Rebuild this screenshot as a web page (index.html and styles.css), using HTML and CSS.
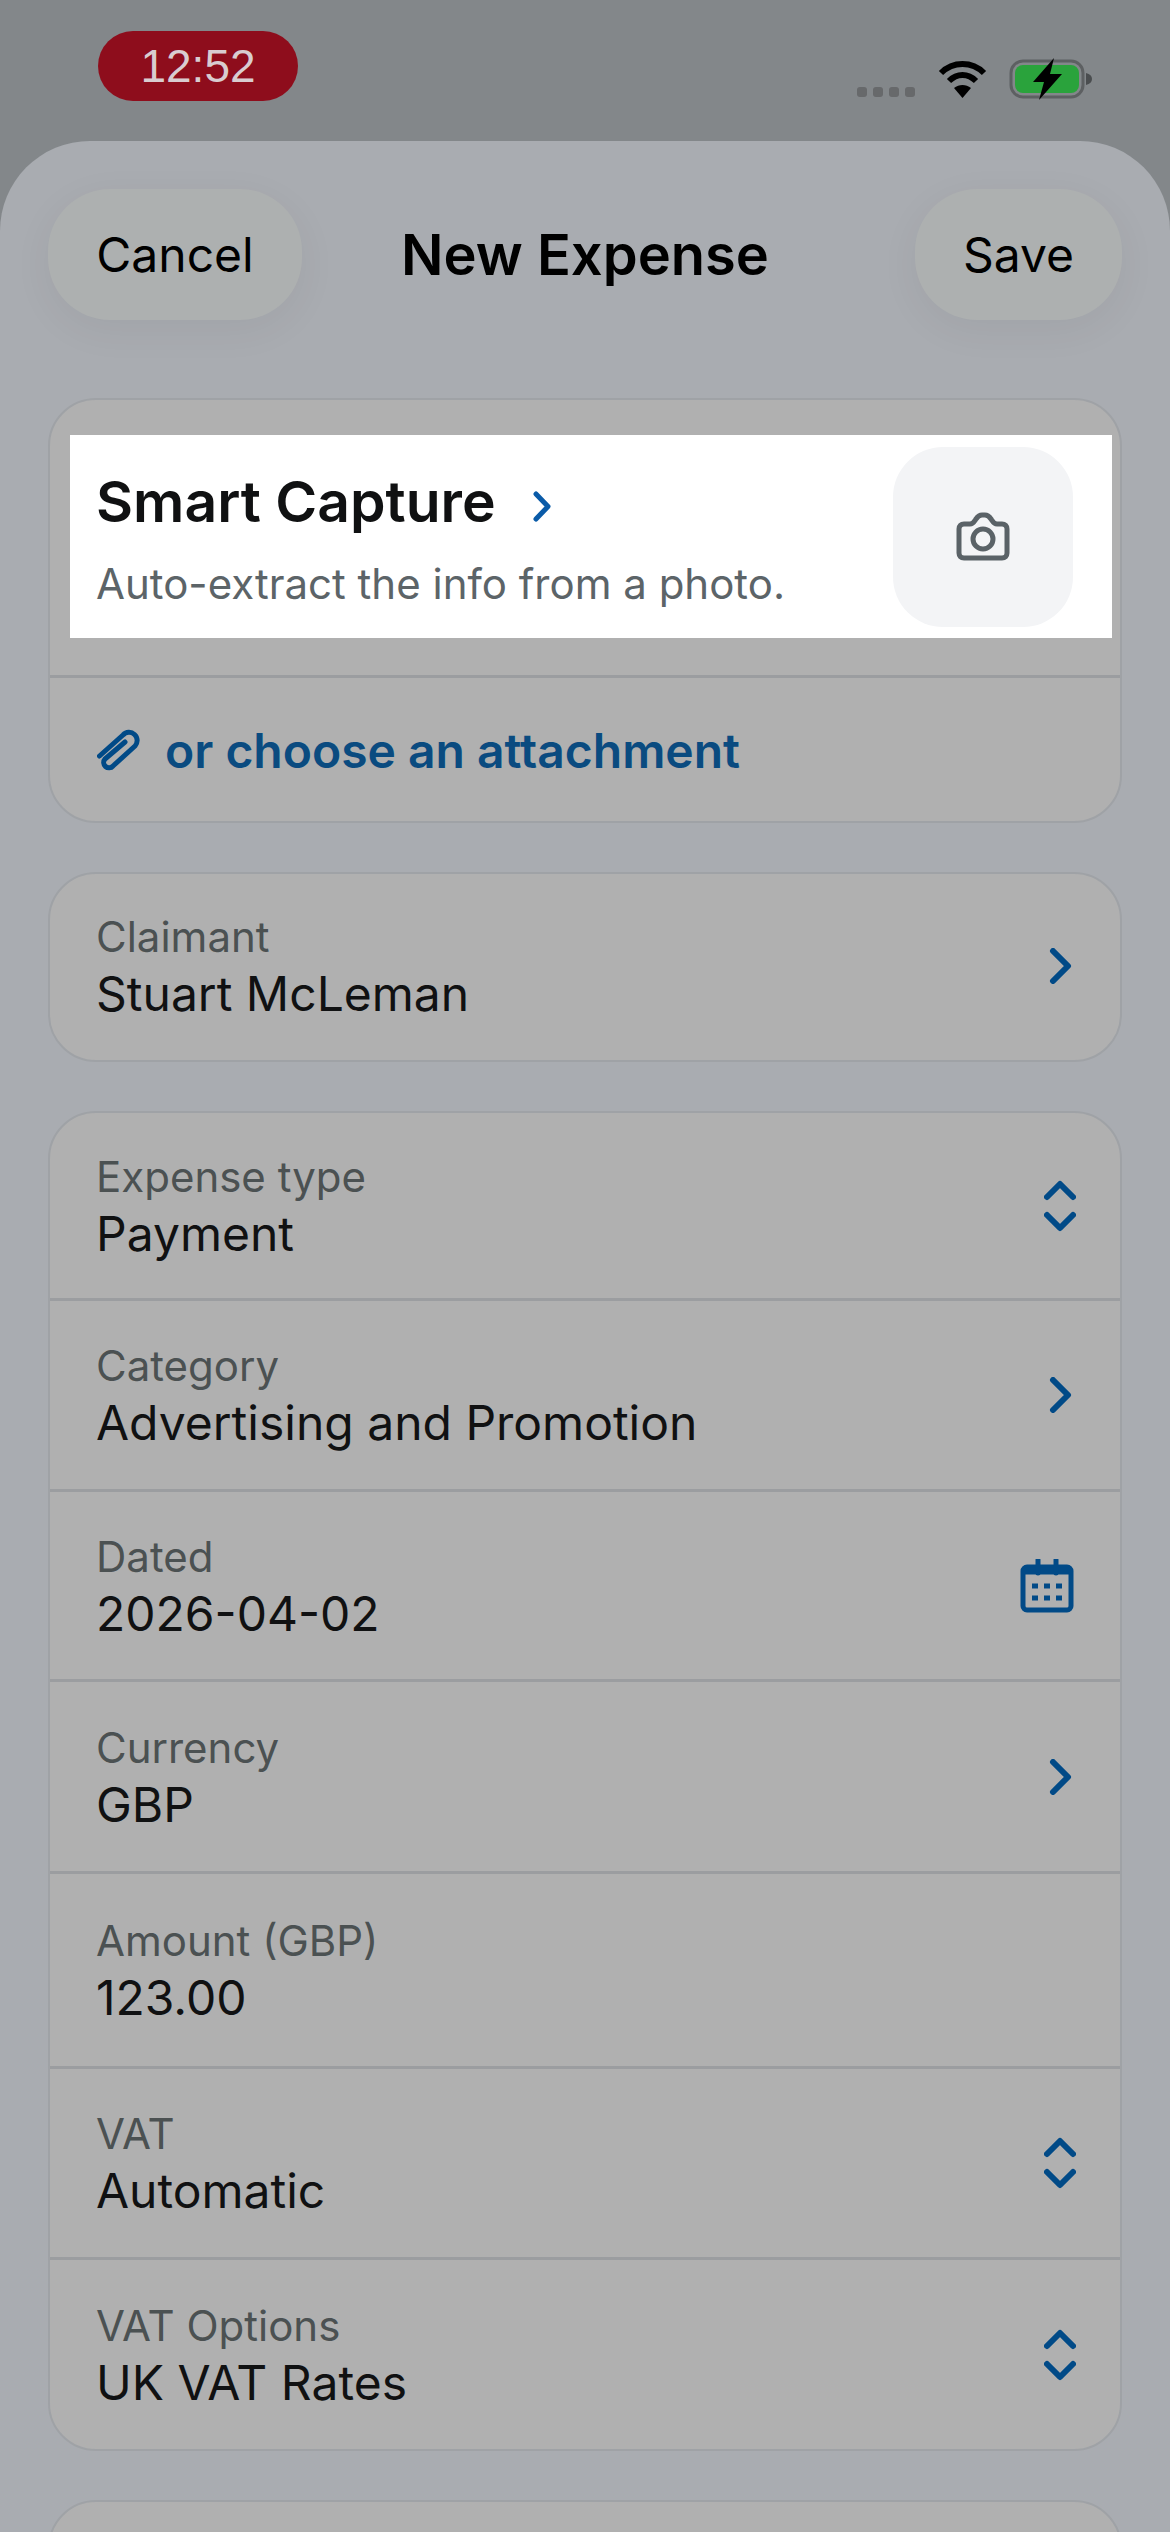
FILE: index.html
```html
<!DOCTYPE html>
<html lang="en">
<head>
  <meta charset="UTF-8">
  <meta name="viewport" content="width=device-width, initial-scale=1.0">
  <title>New Expense</title>
  <link rel="stylesheet" href="styles.css">
</head>
<body>

  <div class="status-bar">
    <div class="clock">12:52</div>
    <div class="status-icons">
      <div class="signal"><span></span><span></span><span></span><span></span></div>
      <svg class="wifi" width="49" height="39" viewBox="0 0 49 39">
        <path d="M3 14C15 2 34 2 46 14" fill="none" stroke="#000" stroke-width="6"/>
        <path d="M11 22C19 14 30 14 38 22" fill="none" stroke="#000" stroke-width="6"/>
        <path d="M16 29C21 25 28 25 33 29L24.5 39Z" fill="#000"/>
      </svg>
      <svg class="battery" width="84" height="44" viewBox="0 0 84 44">
        <rect x="2" y="4" width="72" height="36" rx="12" fill="none" stroke="#5d6062" stroke-width="3"/>
        <rect x="6" y="8" width="64" height="28" rx="8" fill="#2aa33c"/>
        <path d="M77 16c4 1 6 3 6 6s-2 5-6 6z" fill="#4a4d4f"/>
        <path d="M45 1 24 25h11l-5 18 23-26H41z" fill="#000"/>
      </svg>
    </div>
  </div>

  <main class="sheet">
    <header class="nav">
      <button class="nav-btn cancel">Cancel</button>
      <h1>New Expense</h1>
      <button class="nav-btn save">Save</button>
    </header>

    <section class="card">
      <div class="capture-wrap">
        <div class="capture">
          <div class="capture-text">
            <h2>Smart Capture
              <svg class="capture-chevron" width="20" height="31" viewBox="0 0 20 31">
                <path d="M4 3 16 15.5 4 28" fill="none" stroke="#0a5ba8" stroke-width="5" stroke-linecap="round" stroke-linejoin="round"/>
              </svg>
            </h2>
            <p>Auto-extract the info from a photo.</p>
          </div>
          <div class="camera-tile">
            <svg width="54" height="50" viewBox="0 0 54 50">
              <path d="M8 12h6c3 0 4-2 6-5 2-3 3-4 6-4h3c3 0 4 1 6 4 2 3 3 5 6 5h5c3 0 5 2 5 5v24c0 3-2 5-5 5H8c-3 0-5-2-5-5V17c0-3 2-5 5-5z" fill="none" stroke="#5a6267" stroke-width="5" stroke-linejoin="round"/>
              <circle cx="27" cy="27" r="10" fill="none" stroke="#5a6267" stroke-width="5"/>
            </svg>
          </div>
        </div>
      </div>
      <div class="attach">
        <svg width="43" height="43" viewBox="0 0 43 43">
          <path d="M2.500 27 26 6a8 8 0 0 1 12 11L16 37a5 5 0 0 1-8-7L28 13" fill="none" stroke="#014a87" stroke-width="5" stroke-linecap="round" stroke-linejoin="round"/>
        </svg>
        <span>or choose an attachment</span>
      </div>
    </section>

    <section class="card claimant">
      <div class="row">
        <div class="field"><label>Claimant</label><div class="value">Stuart McLeman</div></div>
        <svg class="icon" width="32" height="36" viewBox="0 0 32 36"><path class="ln" d="M9 3 24 18 9 33"/></svg>
      </div>
    </section>

    <section class="card details">
      <div class="row">
        <div class="field"><label>Expense type</label><div class="value">Payment</div></div>
        <svg class="icon" width="32" height="52" viewBox="0 0 32 52"><path class="ln" d="M3 17 16 4 29 17M3 35 16 48 29 35"/></svg>
      </div>
      <div class="row">
        <div class="field"><label>Category</label><div class="value">Advertising and Promotion</div></div>
        <svg class="icon" width="32" height="36" viewBox="0 0 32 36"><path class="ln" d="M9 3 24 18 9 33"/></svg>
      </div>
      <div class="row">
        <div class="field"><label>Dated</label><div class="value">2026-04-02</div></div>
        <svg class="icon calendar" width="54" height="54" viewBox="0 0 54 54">
          <rect x="3" y="8" width="48" height="43" rx="4" fill="none" stroke="#014a87" stroke-width="5"/>
          <path d="M3 12h48" stroke="#014a87" stroke-width="7"/>
          <path d="M18 1v13M36 1v13" stroke="#014a87" stroke-width="5" stroke-linecap="round"/>
          <path d="M12 27h6M24 27h6M36 27h6M12 39h6M24 39h6M36 39h6" stroke="#014a87" stroke-width="5"/>
        </svg>
      </div>
      <div class="row">
        <div class="field"><label>Currency</label><div class="value">GBP</div></div>
        <svg class="icon" width="32" height="36" viewBox="0 0 32 36"><path class="ln" d="M9 3 24 18 9 33"/></svg>
      </div>
      <div class="row">
        <div class="field"><label>Amount (GBP)</label><div class="value">123.00</div></div>
      </div>
      <div class="row">
        <div class="field"><label>VAT</label><div class="value">Automatic</div></div>
        <svg class="icon" width="32" height="52" viewBox="0 0 32 52"><path class="ln" d="M3 17 16 4 29 17M3 35 16 48 29 35"/></svg>
      </div>
      <div class="row">
        <div class="field"><label>VAT Options</label><div class="value">UK VAT Rates</div></div>
        <svg class="icon" width="32" height="52" viewBox="0 0 32 52"><path class="ln" d="M3 17 16 4 29 17M3 35 16 48 29 35"/></svg>
      </div>
    </section>

    <section class="card next"></section>
  </main>

</body>
</html>
```

FILE: styles.css
```css
* {
  box-sizing: border-box;
}
html, body {
  height: 2532px;
  overflow: hidden;
}
body {
  margin: 0;
  font-family: Inter, Lato, sans-serif;
  background-color: #83878a;
  color: #101112;
}

/* status bar */
.status-bar {
  height: 141px;
  padding: 31px 77px 0 98px;
  display: flex;
  justify-content: space-between;
  align-items: flex-start;
}
.clock {
  width: 200px;
  height: 70px;
  border-radius: 35px;
  background-color: #8e0d1c;
  color: #d9ccd0;
  font-family: "Liberation Sans", sans-serif;
  font-size: 46px;
  line-height: 70px;
  text-align: center;
}
.status-icons {
  display: flex;
  align-items: flex-start;
  margin-top: 26px;
}
.signal {
  display: flex;
  gap: 6px;
  margin-top: 30px;
  margin-right: 23px;
}
.signal span {
  width: 10px;
  height: 10px;
  border-radius: 3px;
  background-color: #67696b;
}
.wifi {
  margin-top: 2px;
  margin-right: 22px;
}

/* sheet */
.sheet {
  height: 2391px;
  padding: 48px 48px 0;
  border-radius: 90px 90px 0 0;
  background-color: #a9acb1;
  overflow: hidden;
}
.nav {
  height: 131px;
  margin-bottom: 78px;
  display: grid;
  grid-template-columns: 1fr auto 1fr;
  align-items: center;
}
.nav h1 {
  margin: 0;
  font-size: 56px;
  font-weight: 600;
  color: #000;
}
.nav-btn {
  height: 131px;
  border: none;
  border-radius: 62px;
  background-color: #adb0b0;
  box-shadow: 0 10px 40px rgba(0,0,0,0.05);
  font-family: inherit;
  font-size: 48px;
  color: #000;
}
.cancel {
  width: 254px;
}
.save {
  width: 207px;
  justify-self: end;
}

/* cards */
.card {
  margin-bottom: 49px;
  background-color: #b0b0b0;
  border: 2px solid #9fa2a6;
  border-radius: 48px;
  overflow: hidden;
}
.capture-wrap {
  height: 278px;
  padding: 35px 8px 0 20px;
  border-bottom: 3px solid #9b9da0;
}
.capture {
  height: 203px;
  padding: 0 39px 0 26px;
  background-color: #fff;
  display: flex;
  justify-content: space-between;
  align-items: center;
}
.capture-text {
  padding-top: 5px;
}
.capture h2 {
  margin: 0 0 25px;
  font-size: 57px;
  line-height: 64px;
  font-weight: 600;
}
.capture-chevron {
  margin-left: 22px;
}
.capture p {
  margin: 0;
  font-size: 42px;
  line-height: 50px;
  color: #5c6468;
}
.camera-tile {
  width: 180px;
  height: 180px;
  border-radius: 50px;
  background-color: #f3f4f6;
  display: flex;
  justify-content: center;
  align-items: center;
}
.attach {
  height: 143px;
  padding: 2px 0 0 47px;
  display: flex;
  align-items: center;
  gap: 25px;
  font-size: 48px;
  font-weight: 600;
  color: #0a4b80;
}
.claimant {
  height: 190px;
}
.claimant .row {
  height: 183px;
  border-bottom: none;
}
.details {
  height: 1340px;
  display: grid;
  grid-template-rows: 188px 191px 190px 192px 195px 191px 189px;
}
.row {
  padding: 0 44px 0 46px;
  border-bottom: 3px solid #9b9da0;
  display: flex;
  justify-content: space-between;
  align-items: center;
}
.row:last-child {
  border-bottom: none;
}
.field label {
  display: block;
  font-size: 42px;
  line-height: 56px;
  color: #4b5152;
}
.value {
  font-size: 48px;
  line-height: 58px;
  color: #101112;
}
.ln {
  fill: none;
  stroke: #014a87;
  stroke-width: 6;
  stroke-linecap: round;
  stroke-linejoin: round;
}
.calendar {
  margin-right: 2px;
}
.next {
  height: 200px;
  margin-bottom: 0;
}
```
